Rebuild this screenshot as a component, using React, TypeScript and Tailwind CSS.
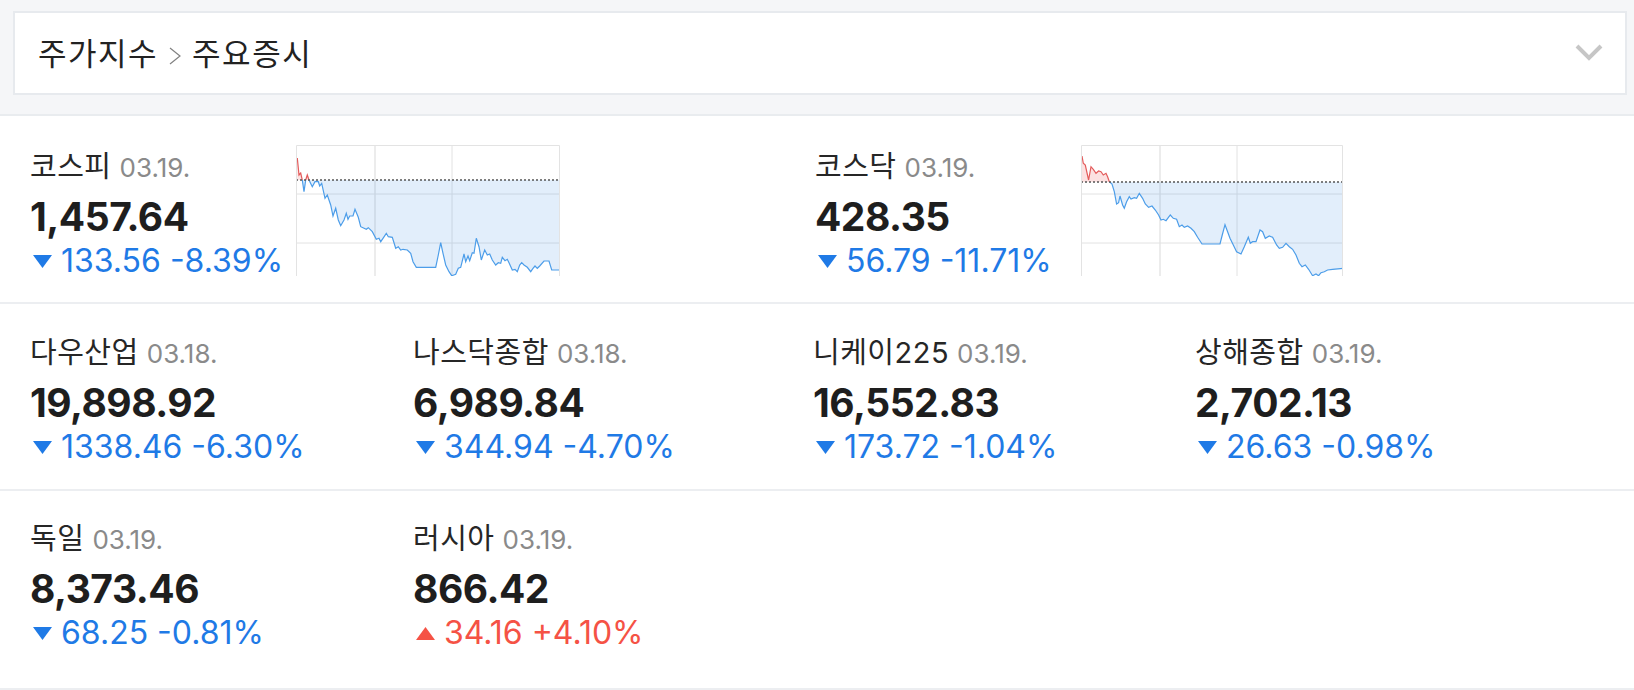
import React from "react";

type Pt = [number, number];

interface Index {
  name: string;
  date: string;
  value: string;
  change: string;
  rate: string;
  up?: boolean;
}

const kospiPts: Pt[] = [
  [1.3, 13], [3, 30], [4.7, 28], [6.3, 35], [8, 46.7], [9.7, 35], [11.3, 30], [13, 35],
  [16.3, 41.7], [19, 36.7], [22.3, 36.7], [23.7, 41], [25.7, 38.3], [29, 53.3], [31.3, 50],
  [34.7, 60], [37, 71], [39.7, 63.3], [42.3, 75], [44.7, 80.7], [48, 75], [50.3, 68.3],
  [52, 74.3], [53.7, 71], [57, 71], [59, 64.3], [62.3, 72.3], [64.7, 81.7], [70.3, 84.3],
  [72.3, 82.7], [76.3, 86.7], [80.3, 94.3], [83, 93.3], [84.7, 96.7], [87, 93.3], [90.3, 88.3],
  [92.3, 91.7], [96.3, 92.3], [99.7, 103.3], [102.3, 101.7], [104.7, 105], [107, 104.3],
  [111.3, 105], [114.7, 108.3], [117, 116.7], [120.3, 122.3], [139.7, 122.3], [142.3, 110],
  [144.7, 97.7], [147, 108.3], [149.7, 120], [153, 126.7], [155.7, 130.7], [159.7, 129.3],
  [162.3, 123.3], [164.7, 122.3], [168, 109], [169.7, 116.7], [172, 111], [173.7, 115.7],
  [176.3, 107.7], [178, 108.3], [180.3, 93.3], [183, 101.7], [185.3, 115], [188.7, 105],
  [191.3, 110], [193.7, 109], [196.3, 115], [199.7, 120], [202.3, 117.7], [204.7, 118.3],
  [206.3, 112.3], [209, 115.7], [211.3, 114.3], [213, 117.7], [216.3, 125], [219, 124.3],
  [221.3, 126.7], [223.7, 120], [225.7, 117.7], [228, 120], [231.3, 122.3], [234.7, 126.7],
  [237, 123.3], [239, 121], [241.3, 123.3], [243.7, 121], [248, 116], [253, 116], [255.7, 125],
  [263, 125],
];

const kosdaqPts: Pt[] = [
  [1, 11], [2.3, 18.3], [4.3, 20], [7.6, 35], [10, 21.7], [12.3, 24.3], [15, 28.3], [17.6, 26],
  [20, 26.7], [22.3, 30], [25, 28.3], [26.6, 31.7], [28.3, 36.7], [31, 39], [33.3, 46.7],
  [35.6, 59], [37.6, 57.7], [39, 51], [41.6, 60], [43.3, 63.3], [45.6, 56.7], [48.3, 51.7],
  [50, 54], [53.3, 52.7], [55.6, 53.3], [58.3, 48.3], [61.6, 53.3], [64.3, 59], [67.6, 62.3],
  [71, 61], [74.3, 65], [77.6, 70], [80, 75], [82.3, 74.3], [85, 75.7], [89.3, 70], [92.3, 73.3],
  [95.6, 74.3], [98.3, 81.7], [101, 80], [103.3, 82.3], [106.6, 81], [110, 83.3], [113.3, 86.7],
  [116.6, 92.3], [121, 99], [139, 99], [141, 91], [144, 79.7], [146.6, 86.7], [149, 93.3],
  [152.3, 100], [155.6, 106.7], [160, 109], [163.3, 101.7], [167.3, 92.3], [169.3, 98.3],
  [171.6, 96.7], [175, 96.7], [179, 85], [181.6, 86.7], [184.3, 93.3], [188.3, 91], [191.6, 92.3],
  [195.6, 100], [198.3, 103.3], [201.6, 102.3], [205, 98.3], [208.3, 101.7], [211.6, 104.3],
  [215, 110], [218.3, 118.3], [221, 121.7], [224.3, 120], [227.6, 124.3], [231.6, 130.7],
  [235, 129], [237.6, 130.7], [240, 127.7], [243.3, 126.7], [246.6, 125], [251.6, 124.3],
  [262, 123.3],
];

const top: Index[] = [
  { name: "코스피", date: "03.19.", value: "1,457.64", change: "133.56", rate: "-8.39%" },
  { name: "코스닥", date: "03.19.", value: "428.35", change: "56.79", rate: "-11.71%" },
];

const world: Index[][] = [
  [
    { name: "다우산업", date: "03.18.", value: "19,898.92", change: "1338.46", rate: "-6.30%" },
    { name: "나스닥종합", date: "03.18.", value: "6,989.84", change: "344.94", rate: "-4.70%" },
    { name: "니케이225", date: "03.19.", value: "16,552.83", change: "173.72", rate: "-1.04%" },
    { name: "상해종합", date: "03.19.", value: "2,702.13", change: "26.63", rate: "-0.98%" },
  ],
  [
    { name: "독일", date: "03.19.", value: "8,373.46", change: "68.25", rate: "-0.81%" },
    { name: "러시아", date: "03.19.", value: "866.42", change: "34.16", rate: "+4.10%", up: true },
  ],
];

const colW = ["w-[383px]", "w-[400px]", "w-[382px]", "flex-1"];

function Spark({ id, pts, base, w }: { id: string; pts: Pt[]; base: number; w: number }) {
  const h = 131;
  const line = pts.map((p) => p.join(",")).join(" ");
  const last = pts[pts.length - 1];
  const area = `M${pts[0][0]},${base} L${line} L${last[0]},${base} Z`;
  return (
    <svg width={w} height={h} viewBox={`0 0 ${w} ${h}`} className="block shrink-0">
      <defs>
        <clipPath id={`${id}-up`}>
          <rect x="0" y="0" width={w} height={base} />
        </clipPath>
        <clipPath id={`${id}-dn`}>
          <rect x="0" y={base} width={w} height={h - base} />
        </clipPath>
      </defs>
      <line x1="79" x2="79" y1="0" y2={h} stroke="#ececec" strokeWidth="2" />
      <line x1="156" x2="156" y1="0" y2={h} stroke="#e2e2e2" />
      <line x1="0" x2={w} y1="49" y2="49" stroke="#e2e2e2" />
      <line x1="0" x2={w} y1="98" y2="98" stroke="#e2e2e2" />
      <path d={area} fill="#ef4b4b" fillOpacity="0.17" clipPath={`url(#${id}-up)`} />
      <path d={area} fill="#3d8fe3" fillOpacity="0.15" clipPath={`url(#${id}-dn)`} />
      <polyline points={line} fill="none" stroke="#e35b5b" strokeWidth="1.2" clipPath={`url(#${id}-up)`} />
      <polyline points={line} fill="none" stroke="#4c9de9" strokeWidth="1.2" clipPath={`url(#${id}-dn)`} />
      <line x1="0" x2={w} y1={base} y2={base} stroke="#555" strokeWidth="1.5" strokeDasharray="2 2" />
      <path d={`M0.5,${h} V0.5 H${w - 0.5} V${h}`} fill="none" stroke="#e3e3e3" />
    </svg>
  );
}

function Arrow({ up }: { up?: boolean }) {
  return (
    <svg width="19" height="13" viewBox="0 0 19 13" className="ml-[3px] mr-[9px] shrink-0">
      {up ? (
        <polygon points="0,13 19,13 9.5,0" fill="#f55245" />
      ) : (
        <polygon points="0,0 19,0 9.5,13" fill="#1f7ae6" />
      )}
    </svg>
  );
}

function Quote({ item }: { item: Index }) {
  return (
    <div>
      <div className="h-[30px] leading-[30px] text-[29px] tracking-[0.5px] text-[#262626] whitespace-nowrap">
        {item.name}
        <span className="ml-[8px] text-[26px] tracking-normal text-[#8a8a8a]">{item.date}</span>
      </div>
      <div className="mt-[13px] h-[44px] leading-[44px] text-[39px] font-bold text-[#1e1e1e] tracking-[-0.5px]">
        {item.value}
      </div>
      <div
        className={`mt-[3px] h-[38px] leading-[38px] text-[32px] flex items-center whitespace-nowrap ${
          item.up ? "text-[#f55245]" : "text-[#1f7ae6]"
        }`}
      >
        <Arrow up={item.up} />
        <span>
          {item.change} {item.rate}
        </span>
      </div>
    </div>
  );
}

export default function App() {
  return (
    <div className="w-[1634px] bg-white font-[Inter,'Noto_Sans_CJK_KR',sans-serif]">
      <div className="bg-[#f5f6f8] pt-[11px] pl-[13px] pr-[7px] h-[116px] border-b-2 border-[#e9ecef]">
        <div className="h-[84px] bg-white border-2 border-[#e7eaee] flex items-center justify-between pl-[23px] pr-[22px] pt-[2px]">
          <div className="flex items-center text-[31px] leading-[32px] text-[#222] tracking-[1.5px]">
            <span>주가지수</span>
            <svg width="14" height="18" viewBox="0 0 14 18" className="mx-[10px] mt-[3px]">
              <polyline points="2,1 12,9 2,17" fill="none" stroke="#808080" strokeWidth="1.2" />
            </svg>
            <span>주요증시</span>
          </div>
          <svg width="28" height="18" viewBox="0 0 28 18" className="mb-[2px]">
            <polyline points="2,2 14,14 26,2" fill="none" stroke="#c6c6c6" strokeWidth="4" />
          </svg>
        </div>
      </div>

      <div className="flex pl-[30px] pt-[29px] h-[188px] border-b-2 border-[#eceef1]">
        {top.map((item, i) => (
          <div key={item.name} className={`flex ${i === 0 ? "w-[785px]" : "flex-1"}`}>
            <div className="w-[266px] pt-[7px]">
              <Quote item={item} />
            </div>
            <Spark
              id={i === 0 ? "kospi" : "kosdaq"}
              pts={i === 0 ? kospiPts : kosdaqPts}
              base={i === 0 ? 35 : 37}
              w={i === 0 ? 264 : 262}
            />
          </div>
        ))}
      </div>

      {world.map((row, r) => (
        <div
          key={r}
          className={`flex pl-[30px] border-b-2 border-[#eceef1] ${
            r === 0 ? "pt-[34px] pb-[23px]" : "pt-[33px] pb-[36px]"
          }`}
        >
          {row.map((item, i) => (
            <div key={item.name} className={colW[i]}>
              <Quote item={item} />
            </div>
          ))}
        </div>
      ))}
    </div>
  );
}
